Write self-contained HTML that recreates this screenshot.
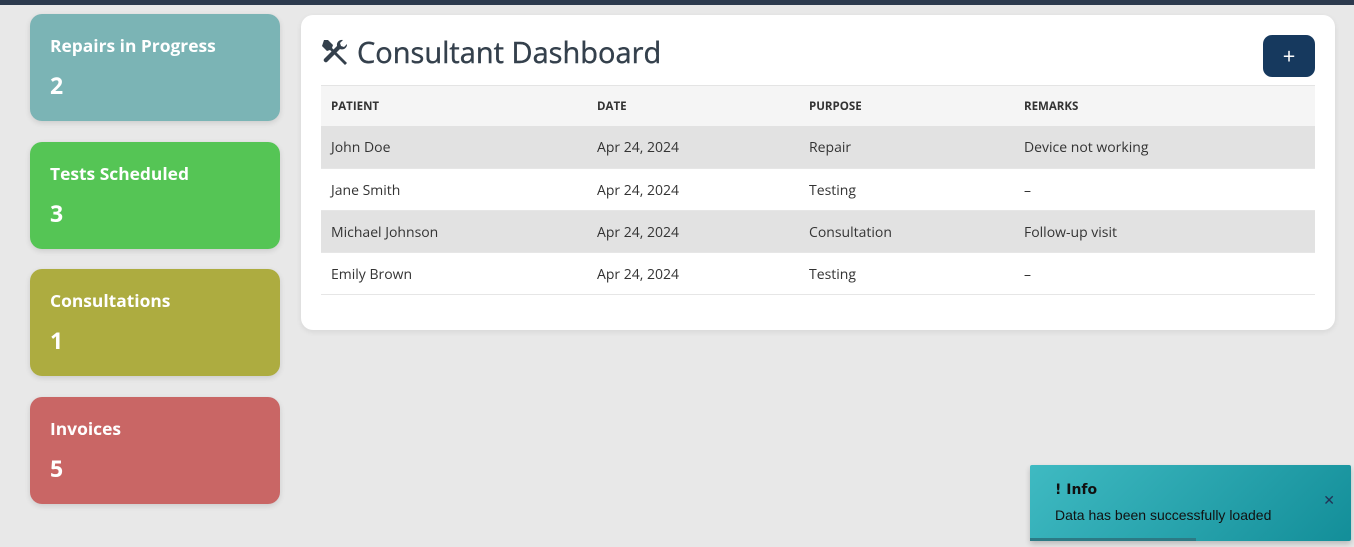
<!DOCTYPE html>
<html><head><style>
body{margin:0;width:1354px;height:547px;background:#e8e8e8;font-family:"Open Sans","Liberation Sans",sans-serif;position:relative;overflow:hidden}
.top{position:absolute;left:0;top:0;width:1354px;height:5px;background:#2c3a4e}
.card{position:absolute;left:30px;width:250px;height:107px;border-radius:12px;color:#fff;box-shadow:0 2px 6px rgba(0,0,0,.12)}
.card .t{position:absolute;left:20px;top:20px;font-size:17.4px;font-weight:bold}
.card .n{position:absolute;left:20px;top:55px;font-size:23px;font-weight:bold}
.panel{position:absolute;left:301px;top:15px;width:1034px;height:315px;background:#fff;border-radius:12px;box-shadow:0 2px 6px rgba(0,0,0,.08)}
h1{position:absolute;left:56px;top:18px;margin:0;font-size:29px;font-weight:normal;color:#34404c;-webkit-text-stroke:0.4px #34404c}
.btn{position:absolute;left:962px;top:20px;width:52px;height:42px;background:#16395e;border-radius:9px;color:#fff;font-size:22px;text-align:center;line-height:42px}
table{position:absolute;left:20px;top:70px;width:994px;border-collapse:collapse;font-size:14px;color:#333}
th{background:#f5f5f5;height:40px;text-align:left;padding:0 10px;font-size:11.5px;font-weight:bold;color:#333;border-top:1px solid #e4e4e4}
td{height:39px;padding:2px 10px 0;border-bottom:1px solid #e6e6e6;box-sizing:border-box}
tr.g td{background:#e2e2e2}
.toast{position:absolute;left:1030px;top:465px;width:321px;height:76px;background:linear-gradient(135deg,#3fbac2,#138e99);box-shadow:0 3px 6px rgba(0,0,0,.2);border-radius:2px;font-family:"DejaVu Sans",sans-serif;color:#111}
.toast b{position:absolute;left:25px;top:17px;font-size:14px}
.toast span{position:absolute;left:25px;top:42px;font-size:14px;font-family:"Liberation Sans",sans-serif}
.toast i{position:absolute;right:16px;top:28px;font-style:normal;font-size:14px;color:#235}
.toast .p{position:absolute;left:0;bottom:0;width:166px;height:3px;background:#2c7a85}
</style></head><body>
<div class="top"></div>
<div class="card" style="top:14px;background:#7bb4b5"><div class="t">Repairs in Progress</div><div class="n">2</div></div>
<div class="card" style="top:142px;background:#55c555"><div class="t">Tests Scheduled</div><div class="n">3</div></div>
<div class="card" style="top:269px;background:#adac40"><div class="t">Consultations</div><div class="n">1</div></div>
<div class="card" style="top:397px;background:#c96665"><div class="t">Invoices</div><div class="n">5</div></div>
<div class="panel">
<svg style="position:absolute;left:20px;top:23px" width="28" height="28" viewBox="0 0 28 28"><g fill="#34404c"><path d="M3 2l4 0 5 5-1 3 15 15-2 2-15-15-3 1-5-5z"/><path d="M26 6a5 5 0 0 1-7 5L6 24a2.2 2.2 0 0 1-3-3L16 8a5 5 0 0 1 6-6l-3 3 1 3 3 1z"/></g></svg>
<h1>Consultant Dashboard</h1>
<div class="btn">+</div>
<table>
<tr><th style="width:246px">PATIENT</th><th style="width:192px">DATE</th><th style="width:195px">PURPOSE</th><th>REMARKS</th></tr>
<tr class="g"><td style="height:42px">John Doe</td><td>Apr 24, 2024</td><td>Repair</td><td>Device not working</td></tr>
<tr><td style="height:42px">Jane Smith</td><td>Apr 24, 2024</td><td>Testing</td><td>–</td></tr>
<tr class="g"><td style="height:42px">Michael Johnson</td><td>Apr 24, 2024</td><td>Consultation</td><td>Follow-up visit</td></tr>
<tr><td style="height:42px">Emily Brown</td><td>Apr 24, 2024</td><td>Testing</td><td>–</td></tr>
</table>
</div>
<div class="toast"><b>! Info</b><span>Data has been successfully loaded</span><i>✕</i><div class="p"></div></div>
</body></html>
